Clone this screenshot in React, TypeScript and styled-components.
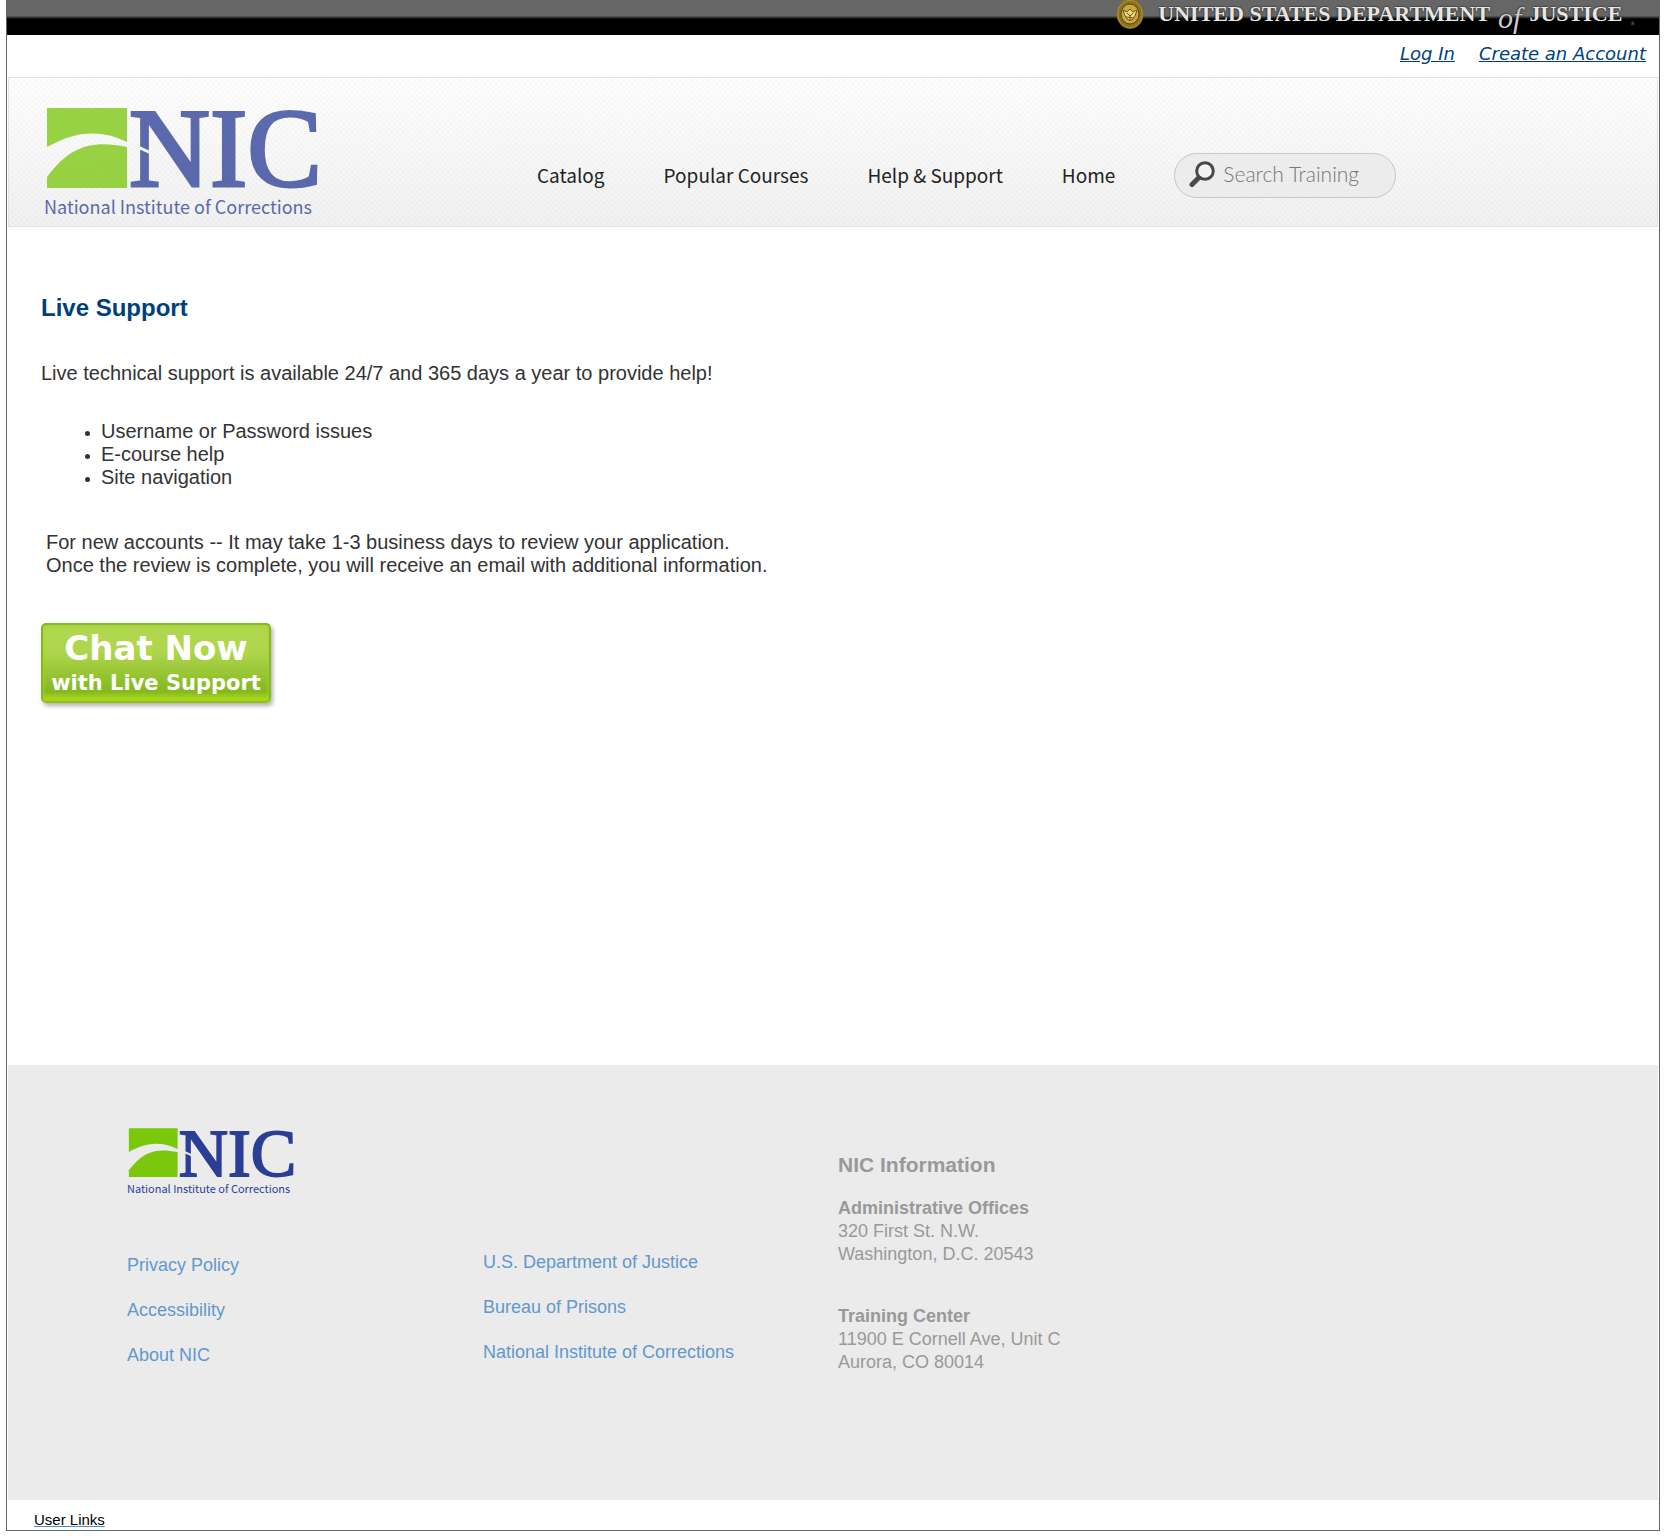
import React from "react";
import styled, { createGlobalStyle } from "styled-components";

const sans = `"Liberation Sans", Arial, sans-serif`;
const humanist = `"Noto Sans CJK SC", "Noto Sans", sans-serif`;
const wide = `"DejaVu Sans", Verdana, sans-serif`;
const serif = `"Liberation Serif", "Times New Roman", serif`;

const GlobalStyle = createGlobalStyle`
  *, *::before, *::after { box-sizing: border-box; }
  body { margin: 0; background: #fff; color: #333; font-family: ${sans}; }
  h2, h3, p, ul { margin: 0; padding: 0; }
`;

const Page = styled.div`
  margin: 0 20px 0 6px;
  border: 1px solid #666;
  border-top: 0;
`;

const AgencyBar = styled.div`
  display: flex;
  justify-content: flex-end;
  align-items: flex-start;
  height: 35px;
  padding-right: 24px;
  background: linear-gradient(#666 0, #666 16px, #3a3a3a 17px, #222 18px, #000 19px);
`;

const Seal = styled.svg`
  width: 28px;
  height: 30px;
  margin-right: 14px;
`;

const AgencyName = styled.div`
  display: flex;
  align-items: flex-start;
  gap: 8px;
  padding-top: 2px;
  font: bold 22px/24px ${serif};
  color: #e6e6e6;
  text-shadow: 0 0 2px #000;
`;

const AgencyOf = styled.span`
  font: italic 30px/32px ${serif};
  color: #ccc;
`;

const Asterisk = styled.span`
  padding-top: 19px;
  margin-left: 8px;
  font-size: 12px;
  line-height: 14px;
  color: #555;
`;

const AccountBar = styled.nav`
  display: flex;
  justify-content: flex-end;
  gap: 24px;
  height: 42px;
  padding: 9px 13px 0 0;
`;

const AccountLink = styled.a`
  font: italic 18px/20px ${wide};
  color: #003f7d;
`;

const Masthead = styled.header`
  display: flex;
  align-items: flex-start;
  height: 150px;
  margin: 0 1px;
  padding: 28px 35px 0;
  border: 1px solid #e2e2e2;
  background:
    repeating-linear-gradient(45deg, rgba(0, 0, 0, 0.012) 0 2px, transparent 2px 4px),
    repeating-linear-gradient(-45deg, rgba(0, 0, 0, 0.012) 0 2px, transparent 2px 4px),
    linear-gradient(#fff, #f2f2f2);
`;

const LogoSvg = styled.svg<{ $faded?: boolean; $width: number }>`
  display: block;
  flex: none;
  width: ${(p) => p.$width}px;
  overflow: visible;
  opacity: ${(p) => (p.$faded ? 0.76 : 1)};
`;

const MainNav = styled.nav`
  display: flex;
  gap: 59px;
  margin: 47px 0 0 219px;
`;

const NavLink = styled.a`
  font: 19px/44px ${humanist};
  color: #222;
  text-decoration: none;
  white-space: nowrap;
`;

const SearchBox = styled.label`
  display: flex;
  align-items: center;
  gap: 8px;
  width: 222px;
  height: 45px;
  padding: 0 14px 3px;
  border: 1px solid #c8c8c8;
  border-radius: 23px;
  background: #ececec;
`;

const SearchInput = styled.input`
  flex: 1;
  min-width: 0;
  padding: 0;
  border: 0;
  outline: 0;
  background: transparent;
  font: 300 21px/28px Lato, sans-serif;
  color: #555;
  &::placeholder { color: #777; opacity: 1; }
`;

const Main = styled.main`
  min-height: 838px;
  padding: 67px 34px 0;
  font-size: 20px;
  line-height: 23px;
`;

const Title = styled.h2`
  font-size: 24px;
  line-height: 28px;
  color: #003f7d;
`;

const Intro = styled.p`
  && { margin-top: 40px; }
`;

const Topics = styled.ul`
  && {
    margin-top: 35px;
    padding-left: 60px;
  }
  li::marker { font-size: 16px; }
`;

const Notice = styled.p`
  && {
    margin-top: 42px;
    padding-left: 5px;
  }
`;

const ChatButton = styled.button`
  display: flex;
  flex-direction: column;
  align-items: center;
  width: 230px;
  height: 80px;
  margin: 46px 0 0;
  padding: 3px 0 0;
  border: 2px solid #84b82a;
  border-bottom-color: #8fbf1c;
  border-radius: 5px;
  background: linear-gradient(#b0d850, #afd64c 35%, #84b820 88%, #a5d41c 96%);
  box-shadow: 2px 3px 4px rgba(0, 0, 0, 0.3), inset 0 0 4px #a8d41c;
  color: #fff;
  font: bold 34px/40px ${wide};
  white-space: nowrap;
`;

const ChatCaption = styled.span`
  font-size: 21px;
  line-height: 30px;
`;

const Footer = styled.footer`
  display: grid;
  grid-template-columns: 356px 355px 1fr;
  height: 435px;
  margin: 0 1px;
  padding: 62px 0 0 119px;
  background: #ebebeb;
  font-size: 18px;
  line-height: 23px;
  color: #999;
`;

const FooterColumn = styled.div<{ $top?: number }>`
  padding-top: ${(p) => p.$top ?? 0}px;
`;

const FooterLinks = styled.ul<{ $top?: number }>`
  && { margin-top: ${(p) => p.$top ?? 0}px; }
  list-style: none;
  line-height: 45px;
`;

const FooterLink = styled.a`
  color: #6298cc;
  text-decoration: none;
`;

const InfoTitle = styled.h3`
  font-size: 21px;
  line-height: 24px;
`;

const Office = styled.address<{ $top: number }>`
  margin-top: ${(p) => p.$top}px;
  font-style: normal;
`;

const BottomBar = styled.div`
  padding: 11px 27px 1px;
  font-size: 15px;
  line-height: 18px;
`;

const UserLink = styled.a`
  color: #000;
  text-decoration-color: #4a90d0;
`;

function Logo({ width, faded }: { width: number; faded?: boolean }) {
  return (
    <LogoSvg $width={width} $faded={faded} viewBox="0 0 274 110" role="img" aria-label="NIC, National Institute of Corrections">
      <path fill="#7ac70c" d="M3 2H83V36C56 23 31 25 3 41Z" />
      <path fill="#7ac70c" d="M3 82V71C26 40 48 34 83 41V82Z" />
      <text x="85" y="80" fontFamily={serif} fontSize="112" fill="#2b3e96" stroke="#2b3e96" strokeWidth="3">
        NIC
      </text>
      <path d="M84 38Q96 41 107 47" fill="none" stroke={faded ? "#f4f4f4" : "#ebebeb"} strokeWidth="3" />
      <text x="0" y="108" fontFamily={humanist} fontSize="18" fill="#2b3e96">
        National Institute of Corrections
      </text>
    </LogoSvg>
  );
}

function SealIcon() {
  return (
    <Seal viewBox="0 0 28 30" aria-hidden="true">
      <ellipse cx="14" cy="14" rx="13.5" ry="15" fill="#8a7220" />
      <ellipse cx="14" cy="14" rx="12" ry="13.4" fill="none" stroke="#d0b450" strokeDasharray="1 1" />
      <ellipse cx="14" cy="14" rx="9" ry="10" fill="#c8a840" stroke="#574711" />
      <path d="M7 10l4 2 3-3 3 3 4-2-2 6-3 4h-4l-3-4z" fill="#ead878" stroke="#6b571a" strokeWidth="1" />
      <path d="M11 13l3 3 3-3M14 16v5M10 17l8 1" fill="none" stroke="#6b571a" />
    </Seal>
  );
}

function SearchIcon() {
  return (
    <svg width="26" height="27" viewBox="0 0 26 27" aria-hidden="true">
      <path d="M10.5 16L3 23.5" stroke="#4a4a4a" strokeWidth="5" strokeLinecap="round" />
      <circle cx="16" cy="10" r="8.3" fill="#f3f3f3" stroke="#484848" strokeWidth="3" />
    </svg>
  );
}

const navItems = ["Catalog", "Popular Courses", "Help & Support", "Home"];
const siteLinks = ["Privacy Policy", "Accessibility", "About NIC"];
const partnerLinks = ["U.S. Department of Justice", "Bureau of Prisons", "National Institute of Corrections"];

function LinkList({ items, top }: { items: string[]; top?: number }) {
  return (
    <FooterLinks $top={top}>
      {items.map((item) => (
        <li key={item}>
          <FooterLink href="#">{item}</FooterLink>
        </li>
      ))}
    </FooterLinks>
  );
}

export default function App() {
  return (
    <>
      <GlobalStyle />
      <Page>
        <AgencyBar>
          <SealIcon />
          <AgencyName>
            <span>UNITED STATES DEPARTMENT</span>
            <AgencyOf>of</AgencyOf>
            <span>JUSTICE</span>
          </AgencyName>
          <Asterisk>*</Asterisk>
        </AgencyBar>
        <AccountBar aria-label="Account">
          <AccountLink href="#">Log In</AccountLink>
          <AccountLink href="#">Create an Account</AccountLink>
        </AccountBar>
        <Masthead>
          <Logo width={274} faded />
          <MainNav aria-label="Main">
            {navItems.map((item) => (
              <NavLink key={item} href="#">{item}</NavLink>
            ))}
            <SearchBox>
              <SearchIcon />
              <SearchInput type="text" placeholder="Search Training" aria-label="Search Training" />
            </SearchBox>
          </MainNav>
        </Masthead>
        <Main>
          <Title>Live Support</Title>
          <Intro>Live technical support is available 24/7 and 365 days a year to provide help!</Intro>
          <Topics>
            <li>Username or Password issues</li>
            <li>E-course help</li>
            <li>Site navigation</li>
          </Topics>
          <Notice>
            For new accounts -- It may take 1-3 business days to review your application.
            <br />
            Once the review is complete, you will receive an email with additional information.
          </Notice>
          <ChatButton type="button">
            Chat Now
            <ChatCaption>with Live Support</ChatCaption>
          </ChatButton>
        </Main>
        <Footer>
          <FooterColumn>
            <Logo width={167} />
            <LinkList items={siteLinks} top={49} />
          </FooterColumn>
          <FooterColumn $top={113}>
            <LinkList items={partnerLinks} />
          </FooterColumn>
          <FooterColumn $top={26}>
            <InfoTitle>NIC Information</InfoTitle>
            <Office $top={20}>
              <strong>Administrative Offices</strong>
              <br />
              320 First St. N.W.
              <br />
              Washington, D.C. 20543
            </Office>
            <Office $top={39}>
              <strong>Training Center</strong>
              <br />
              11900 E Cornell Ave, Unit C
              <br />
              Aurora, CO 80014
            </Office>
          </FooterColumn>
        </Footer>
        <BottomBar>
          <UserLink href="#">User Links</UserLink>
        </BottomBar>
      </Page>
    </>
  );
}
